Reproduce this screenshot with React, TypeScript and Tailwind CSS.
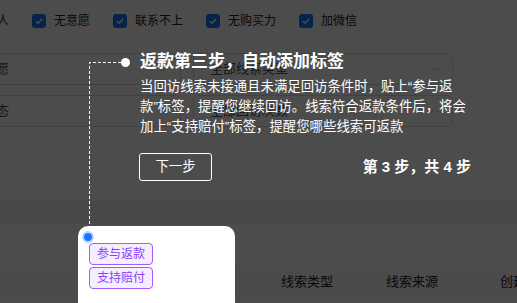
import { ChevronDown } from 'lucide-react';

const font = { fontFamily: '"Liberation Sans", "Noto Sans CJK SC", sans-serif' };

const reasons = ['非本人', '无意愿', '联系不上', '无购买力', '加微信'];

const Checkbox = ({ label }: { label: string }) => (
  <label className="flex shrink-0 items-center gap-[8px] text-[12px] leading-[14px] text-[#222]">
    <span className="flex h-[14px] w-[14px] items-center justify-center rounded-[3px] bg-[#1677ff]">
      <svg viewBox="0 0 12 12" className="h-[10px] w-[10px]" fill="none" stroke="white" strokeWidth="1.8">
        <path d="M2.5 6.2 5 8.6 9.6 3.6" />
      </svg>
    </span>
    {label}
  </label>
);

const Select = ({ value, width }: { value: string; width: string }) => (
  <div className={`flex h-[32px] shrink-0 items-center justify-between rounded-md border border-[#d9d9d9] pl-[16px] pr-[10px] text-[13px] text-[#555] ${width}`}>
    <span>{value}</span>
    <ChevronDown className="h-[14px] w-[14px] text-[#bfbfbf]" strokeWidth={1.5} />
  </div>
);

export default function App() {
  return (
    <div className="relative h-[303px] w-[517px] overflow-hidden bg-white" style={font}>
      {/* page under the guide mask */}
      <div className="ml-[-49px] flex items-center gap-[23px] pt-[14px]">
        {reasons.map((r) => (
          <Checkbox key={r} label={r} />
        ))}
      </div>

      <div className="ml-[-60px] mt-[25px] flex flex-col gap-[10px]">
        <div className="flex gap-[12px]">
          <Select value="全部意愿" width="w-[241px]" />
          <Select value="全部线索类型" width="w-[260px]" />
        </div>
        <div className="flex gap-[12px]">
          <Select value="全部状态" width="w-[241px]" />
          <Select value="全部回访次数" width="w-[260px]" />
        </div>
      </div>

      <div className="mt-[74px] h-[22px] bg-[#f0f2f5]" />

      <div className="mt-[42px] flex h-[34px] items-center bg-[#fafafa] text-[13px] text-[#222]">
        <div className="w-[281px] shrink-0" />
        <div className="w-[105px] shrink-0">线索类型</div>
        <div className="w-[114px] shrink-0">线索来源</div>
        <div className="shrink-0 whitespace-nowrap">创建时间</div>
      </div>

      {/* mask */}
      <div className="absolute inset-0 bg-black/70" />

      {/* highlighted target */}
      <div className="absolute left-[78px] top-[226px] h-[90px] w-[157px] rounded-[10px] bg-white">
        <span className="absolute left-[6px] top-[7px] h-[8px] w-[8px] rounded-full bg-[#1677ff] ring-[2px] ring-[#b9d6ff]" />
        <div className="flex flex-col gap-[2px] pl-[11px] pt-[17px]">
          {['参与返款', '支持赔付'].map((t) => (
            <span
              key={t}
              className="flex h-[22px] w-[64px] items-center justify-center rounded-[4px] border border-[#a35bff] bg-[#f5eeff] text-[12px] text-[#8b3dff]"
            >
              {t}
            </span>
          ))}
        </div>
      </div>

      {/* connector */}
      <svg className="pointer-events-none absolute left-0 top-0 h-[303px] w-[517px]">
        <path d="M121 62.5 H89.5 V227" fill="none" stroke="white" strokeWidth="1" strokeDasharray="3 2" />
      </svg>

      {/* guide popover */}
      <div className="absolute left-[121px] top-[52px] w-[350px] text-white">
        <div className="flex items-center">
          <span className="h-[9px] w-[9px] rounded-full bg-white" />
          <h3 className="ml-[10px] text-[17px] font-bold leading-[20px]">返款第三步，自动添加标签</h3>
        </div>
        <p className="mt-[5px] whitespace-nowrap pl-[19px] text-[13.4px] leading-[20px]">
          当回访线索未接通且未满足回访条件时，贴上“参与返
          <br />
          款”标签，提醒您继续回访。线索符合返款条件后，将会
          <br />
          加上“支持赔付”标签，提醒您哪些线索可返款
        </p>
        <div className="mt-[16px] flex items-center justify-between pl-[18px]">
          <button className="h-[28px] w-[73px] rounded-[3px] border border-white text-[13.4px]">下一步</button>
          <span className="text-[15px] font-bold">第 3 步，共 4 步</span>
        </div>
      </div>
    </div>
  );
}
